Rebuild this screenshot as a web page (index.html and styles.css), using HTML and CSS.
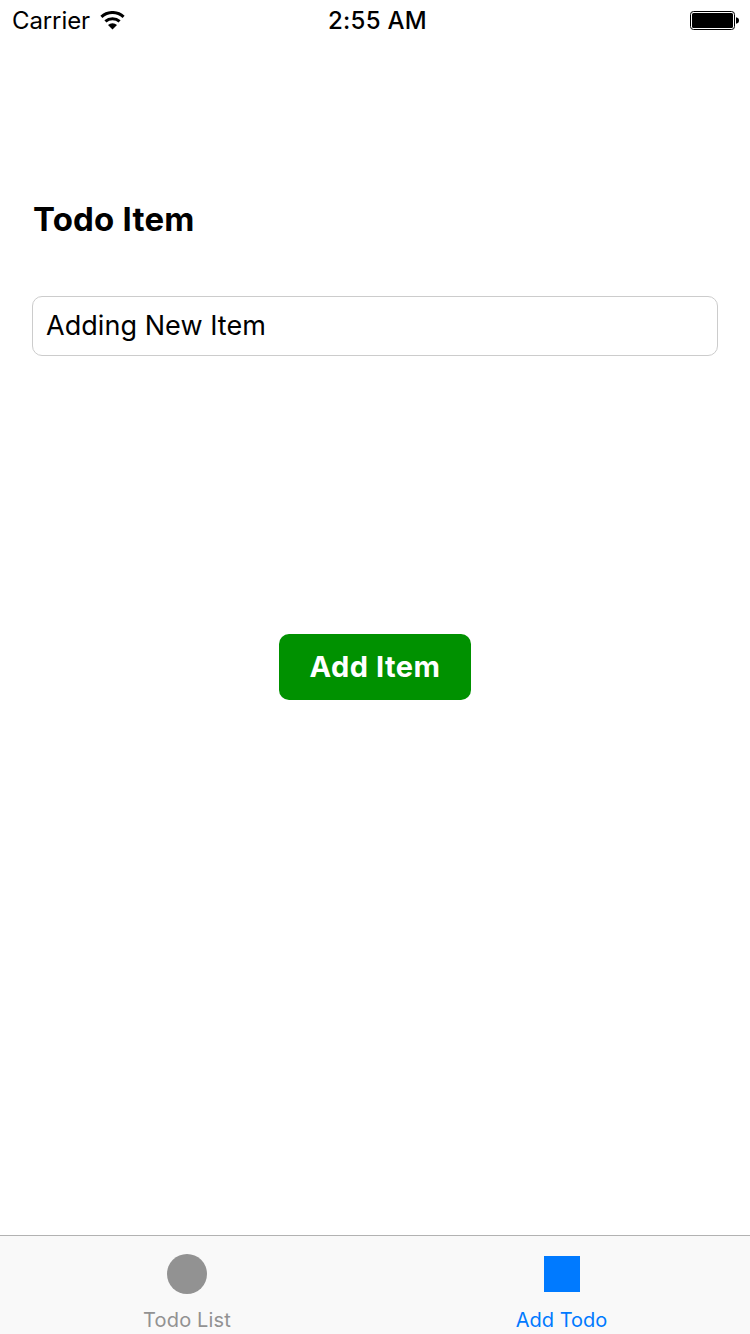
FILE: index.html
```html
<!DOCTYPE html>
<html lang="en">
<head>
<meta charset="utf-8">
<title>Todo</title>
<link rel="stylesheet" href="styles.css">
</head>
<body>
<div class="screen">
  <header class="status">
    <div class="carrier"><span class="carrier-name">Carrier</span>
      <svg class="wifi" width="26" height="20" viewBox="0 0 26 20"><path d="M1.4 5.8a16.4 16.4 0 0 1 22.2 0M5.4 10.4a10.6 10.6 0 0 1 14.2 0" fill="none" stroke="#000" stroke-width="3"/><path d="M8 13.9a6.6 6.6 0 0 1 9 0l-4.5 4.5z"/></svg>
    </div>
    <time class="time">2:55 AM</time>
    <div class="power">
      <svg class="battery" width="50" height="20" viewBox="0 0 50 20"><rect x=".5" y=".5" width="44" height="18" rx="3" fill="none" stroke="#000"/><rect x="2" y="2" width="41" height="15" rx="1.5"/><path d="M46 6.2q3 .6 3 3.3t-3 3.3z"/></svg>
    </div>
  </header>
  <main class="content">
    <h1 class="title">Todo Item</h1>
    <div class="field"><span class="field-text">Adding New Item</span></div>
    <button class="add"><span class="add-text">Add Item</span></button>
  </main>
  <nav class="tabs">
    <a class="tab"><span class="circle"></span><span class="label label-list">Todo List</span></a>
    <a class="tab active"><span class="square"></span><span class="label label-add">Add Todo</span></a>
  </nav>
</div>
</body>
</html>
```
FILE: styles.css
```css
* { box-sizing: border-box; }
body { margin: 0; background: #fff; color: #000; font-family: Inter, "Liberation Sans", sans-serif; }
.screen { width: 750px; height: 1334px; display: flex; flex-direction: column; overflow: hidden; }
.status { height: 42px; display: grid; grid-template-columns: 1fr auto 1fr; align-items: center; padding: 0 10px 0 12px; font-size: 24px; line-height: 42px; }
.carrier { display: flex; align-items: center; gap: 10px; }
.carrier-name { letter-spacing: -.1px; }
.time { padding-left: 3px; font-weight: 500; letter-spacing: .3px; }
.power { display: flex; justify-content: flex-end; }
.content { flex: 1; display: flex; flex-direction: column; padding: 157px 32px 0; }
.title { margin: 0 0 57px; padding-left: 1px; font-size: 33px; line-height: 40px; font-weight: 700; letter-spacing: .2px; }
.field { height: 60px; border: 1px solid #ccc; border-radius: 10px; padding: 0 13px; font-size: 27px; line-height: 58px; letter-spacing: .05px; }
.add { align-self: center; width: 192px; height: 66px; margin-top: 278px; padding: 0; border: 0; border-radius: 10px; background: #009100; color: #fff; font: 700 29px/66px Inter, sans-serif; letter-spacing: .5px; }
.tabs { height: 99px; display: grid; grid-template-columns: 1fr 1fr; background: #f9f9f9; border-top: 1px solid #b2b2b2; }
.tab { display: flex; flex-direction: column; align-items: center; color: #929292; font-size: 20px; line-height: 24px; padding: 18px 1px 0 0; }
.active { padding-right: 2px; color: #007aff; }
.label-list { letter-spacing: .15px; }
.circle { width: 40px; height: 40px; border-radius: 50%; background: #929292; margin-bottom: 14px; }
.square { width: 36px; height: 36px; background: #007aff; margin: 2px 0 16px; }
```
